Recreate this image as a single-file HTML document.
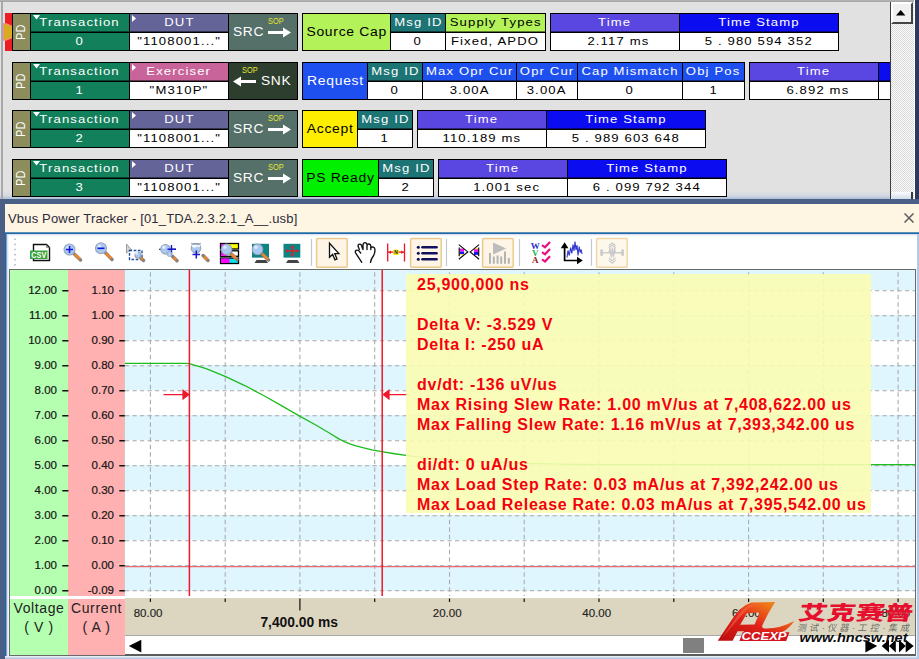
<!DOCTYPE html><html><head><meta charset="utf-8"><title>Vbus Power Tracker</title><style>
*{margin:0;padding:0;box-sizing:border-box}
html,body{width:919px;height:659px;overflow:hidden;background:#e1e1e1;font-family:"Liberation Sans",sans-serif}
.a{position:absolute}
.k{position:absolute;background:#000}
.c{position:absolute;text-align:center;white-space:nowrap;font-size:11.6px;letter-spacing:1px;line-height:15.4px;height:17px;overflow:hidden}
.h{height:18px;line-height:16.4px;box-shadow:inset 0 -1px rgba(0,0,0,.5)}
.s{display:inline-block;transform:scaleX(1.13)}
.w{color:#fff}
.v{background:#fff;color:#000}
.big{font-size:12.2px;letter-spacing:.6px}
.yl{position:absolute;font-size:11.5px;color:#111;-webkit-text-stroke:.2px #222;text-align:right;white-space:nowrap;line-height:14px;height:14px}
.xl{position:absolute;font-size:11.5px;color:#222;-webkit-text-stroke:.15px #222;text-align:center;white-space:nowrap;line-height:14px;width:80px}
.info{position:absolute;left:417px;font-weight:bold;font-size:16px;line-height:20px;color:#f6000f;white-space:nowrap;letter-spacing:.73px}
</style></head><body>
<div class="a" id="top" style="left:0;top:0;width:919px;height:199px;background:#e1e1e1;overflow:hidden">
<div class="a" style="left:0;top:191px;width:915px;height:8px;background:linear-gradient(#e1e1e1,#d4dae2 55%,#aebfd6)"></div>
<div class="a" style="left:1px;top:0;width:2px;height:199px;background:#a8a8a8"></div>
<div class="a" style="left:5px;top:13px;width:7px;height:38px;background:#ee1c24"></div>
<svg class="a" style="left:2px;top:22px" width="12" height="20"><path d="M1.6 1.5L3.5 1.4L10.6 4.4V15.6L3.5 18.4L1.6 18.3Z" fill="#dca820" stroke="#f08c8c" stroke-width="1"/></svg>
<div class="k" style="left:12px;top:13px;width:286px;height:38px"></div>
<div class="a" style="left:13px;top:14px;width:17px;height:36px;background:#8c8c5c"><div class="a w" style="left:0;top:0;width:17px;height:36px"><span class="a" style="left:-10px;top:11px;width:36px;text-align:center;font-size:12px;line-height:14px;letter-spacing:.6px;transform:rotate(-90deg) scaleX(.88)">PD</span></div></div>
<div class="c h" style="left:31px;top:14px;width:98px;background:#12805a;color:#fff"><svg class="a" style="left:2px;top:1px" width="8" height="5"><path d="M0 0H7L3.5 4.5Z" fill="#fff"/></svg><span class="s">Transaction</span></div>
<div class="c" style="left:31px;top:33px;width:98px;background:#12805a;color:#fff;padding-left:0px"><span class="s">0</span></div>
<div class="c h" style="left:130px;top:14px;width:98px;background:#646499;color:#fff"><svg class="a" style="left:2px;top:1px" width="5" height="8"><path d="M0 0V7L4 3.5Z" fill="#fff"/></svg><span class="s">DUT</span></div>
<div class="c" style="left:130px;top:33px;width:98px;background:#fff;color:#000;padding-left:0px"><span class="s">&quot;1108001...&quot;</span></div>
<div class="a" style="left:229px;top:14px;width:68px;height:36px;background:#557068"><span class="a w big" style="left:3.5px;top:10.4px;line-height:16px;transform:scaleX(1.13);transform-origin:0 0">SRC</span><span class="a" style="left:39px;top:2px;font-size:9px;line-height:10px;color:#e6e632;letter-spacing:0;transform:scaleX(.82);transform-origin:0 0">SOP</span><svg class="a" style="left:39px;top:13px" width="24" height="11"><path d="M0 4H15V0.5L23 5.5L15 10.5V7H0Z" fill="#fff"/></svg></div>
<div class="k" style="left:302px;top:13px;width:244px;height:38px"></div>
<div class="a" style="left:303px;top:14px;width:87px;height:36px;background:#b4f25a"><div class="a" style="left:0;right:0;top:10px;text-align:center;font-size:12px;letter-spacing:0.6px;line-height:16px;color:#000;white-space:nowrap"><span class="s" style="transform:scaleX(1.16)">Source Cap</span></div></div>
<div class="c h" style="left:391px;top:14px;width:54px;background:#1c7474;color:#fff"><span class="s">Msg ID</span></div>
<div class="c" style="left:391px;top:33px;width:54px;background:#fff;color:#000;padding-left:0px"><span class="s">0</span></div>
<div class="c h" style="left:446px;top:14px;width:99px;background:#b4f25a;color:#000"><span class="s">Supply Types</span></div>
<div class="c" style="left:446px;top:33px;width:99px;background:#fff;color:#000;padding-left:0px"><span class="s">Fixed, APDO</span></div>
<div class="k" style="left:550px;top:13px;width:289px;height:38px"></div>
<div class="c h" style="left:551px;top:14px;width:128px;background:#5a46e0;color:#fff"><span class="s">Time</span></div>
<div class="c" style="left:551px;top:33px;width:128px;background:#fff;color:#000;padding-left:7px"><span class="s">2.117 ms</span></div>
<div class="c h" style="left:680px;top:14px;width:158px;background:#0c0cf0;color:#fff"><span class="s">Time Stamp</span></div>
<div class="c" style="left:680px;top:33px;width:158px;background:#fff;color:#000;padding-left:0px"><span class="s">5 . 980 594 352</span></div>
<div class="k" style="left:12px;top:62px;width:286px;height:38px"></div>
<div class="a" style="left:13px;top:63px;width:17px;height:36px;background:#8c8c5c"><div class="a w" style="left:0;top:0;width:17px;height:36px"><span class="a" style="left:-10px;top:11px;width:36px;text-align:center;font-size:12px;line-height:14px;letter-spacing:.6px;transform:rotate(-90deg) scaleX(.88)">PD</span></div></div>
<div class="c h" style="left:31px;top:63px;width:98px;background:#12805a;color:#fff"><svg class="a" style="left:2px;top:1px" width="8" height="5"><path d="M0 0H7L3.5 4.5Z" fill="#fff"/></svg><span class="s">Transaction</span></div>
<div class="c" style="left:31px;top:82px;width:98px;background:#12805a;color:#fff;padding-left:0px"><span class="s">1</span></div>
<div class="c h" style="left:130px;top:63px;width:98px;background:#c8649a;color:#fff"><svg class="a" style="left:2px;top:1px" width="5" height="8"><path d="M0 0V7L4 3.5Z" fill="#fff"/></svg><span class="s">Exerciser</span></div>
<div class="c" style="left:130px;top:82px;width:98px;background:#fff;color:#000;padding-left:0px"><span class="s">&quot;M310P&quot;</span></div>
<div class="a" style="left:229px;top:63px;width:68px;height:36px;background:#2e3e2e"><span class="a w big" style="left:32px;top:10.4px;line-height:16px;transform:scaleX(1.13);transform-origin:0 0">SNK</span><span class="a" style="left:13px;top:2px;font-size:9px;line-height:10px;color:#e6e632;letter-spacing:0;transform:scaleX(.82);transform-origin:0 0">SOP</span><svg class="a" style="left:4px;top:13px" width="24" height="11"><path d="M23 4H8V0.5L0 5.5L8 10.5V7H23Z" fill="#fff"/></svg></div>
<div class="k" style="left:302px;top:62px;width:443px;height:38px"></div>
<div class="a" style="left:303px;top:63px;width:64px;height:36px;background:#1e50f0"><div class="a" style="left:0;right:0;top:10px;text-align:center;font-size:12px;letter-spacing:0.6px;line-height:16px;color:#fff;white-space:nowrap"><span class="s" style="transform:scaleX(1.16)">Request</span></div></div>
<div class="c h" style="left:368px;top:63px;width:54px;background:#1c7474;color:#fff"><span class="s">Msg ID</span></div>
<div class="c" style="left:368px;top:82px;width:54px;background:#fff;color:#000;padding-left:0px"><span class="s">0</span></div>
<div class="c h" style="left:423px;top:63px;width:93px;background:#1e50f0;color:#fff"><span class="s">Max Opr Cur</span></div>
<div class="c" style="left:423px;top:82px;width:93px;background:#fff;color:#000;padding-left:0px"><span class="s">3.00A</span></div>
<div class="c h" style="left:517px;top:63px;width:60px;background:#1e50f0;color:#fff"><span class="s">Opr Cur</span></div>
<div class="c" style="left:517px;top:82px;width:60px;background:#fff;color:#000;padding-left:0px"><span class="s">3.00A</span></div>
<div class="c h" style="left:578px;top:63px;width:104px;background:#1e50f0;color:#fff"><span class="s">Cap Mismatch</span></div>
<div class="c" style="left:578px;top:82px;width:104px;background:#fff;color:#000;padding-left:0px"><span class="s">0</span></div>
<div class="c h" style="left:683px;top:63px;width:61px;background:#1e50f0;color:#fff"><span class="s">Obj Pos</span></div>
<div class="c" style="left:683px;top:82px;width:61px;background:#fff;color:#000;padding-left:0px"><span class="s">1</span></div>
<div class="k" style="left:749px;top:62px;width:152px;height:38px"></div>
<div class="c h" style="left:750px;top:63px;width:128px;background:#5a46e0;color:#fff"><span class="s">Time</span></div>
<div class="c" style="left:750px;top:82px;width:128px;background:#fff;color:#000;padding-left:8px"><span class="s">6.892 ms</span></div>
<div class="c h" style="left:879px;top:63px;width:21px;background:#0c0cf0;color:#fff"><span class="s"></span></div>
<div class="c" style="left:879px;top:82px;width:21px;background:#fff;color:#000;padding-left:0px"><span class="s"></span></div>
<div class="k" style="left:12px;top:110px;width:286px;height:38px"></div>
<div class="a" style="left:13px;top:111px;width:17px;height:36px;background:#8c8c5c"><div class="a w" style="left:0;top:0;width:17px;height:36px"><span class="a" style="left:-10px;top:11px;width:36px;text-align:center;font-size:12px;line-height:14px;letter-spacing:.6px;transform:rotate(-90deg) scaleX(.88)">PD</span></div></div>
<div class="c h" style="left:31px;top:111px;width:98px;background:#12805a;color:#fff"><svg class="a" style="left:2px;top:1px" width="8" height="5"><path d="M0 0H7L3.5 4.5Z" fill="#fff"/></svg><span class="s">Transaction</span></div>
<div class="c" style="left:31px;top:130px;width:98px;background:#12805a;color:#fff;padding-left:0px"><span class="s">2</span></div>
<div class="c h" style="left:130px;top:111px;width:98px;background:#646499;color:#fff"><svg class="a" style="left:2px;top:1px" width="5" height="8"><path d="M0 0V7L4 3.5Z" fill="#fff"/></svg><span class="s">DUT</span></div>
<div class="c" style="left:130px;top:130px;width:98px;background:#fff;color:#000;padding-left:0px"><span class="s">&quot;1108001...&quot;</span></div>
<div class="a" style="left:229px;top:111px;width:68px;height:36px;background:#557068"><span class="a w big" style="left:3.5px;top:10.4px;line-height:16px;transform:scaleX(1.13);transform-origin:0 0">SRC</span><span class="a" style="left:39px;top:2px;font-size:9px;line-height:10px;color:#e6e632;letter-spacing:0;transform:scaleX(.82);transform-origin:0 0">SOP</span><svg class="a" style="left:39px;top:13px" width="24" height="11"><path d="M0 4H15V0.5L23 5.5L15 10.5V7H0Z" fill="#fff"/></svg></div>
<div class="k" style="left:302px;top:110px;width:111px;height:38px"></div>
<div class="a" style="left:303px;top:111px;width:54px;height:36px;background:#ffee00"><div class="a" style="left:0;right:0;top:10px;text-align:center;font-size:12px;letter-spacing:0.6px;line-height:16px;color:#000;white-space:nowrap"><span class="s" style="transform:scaleX(1.16)">Accept</span></div></div>
<div class="c h" style="left:358px;top:111px;width:54px;background:#1c7474;color:#fff"><span class="s">Msg ID</span></div>
<div class="c" style="left:358px;top:130px;width:54px;background:#fff;color:#000;padding-left:0px"><span class="s">1</span></div>
<div class="k" style="left:417px;top:110px;width:289px;height:38px"></div>
<div class="c h" style="left:418px;top:111px;width:128px;background:#5a46e0;color:#fff"><span class="s">Time</span></div>
<div class="c" style="left:418px;top:130px;width:128px;background:#fff;color:#000;padding-left:0px"><span class="s">110.189 ms</span></div>
<div class="c h" style="left:547px;top:111px;width:158px;background:#0c0cf0;color:#fff"><span class="s">Time Stamp</span></div>
<div class="c" style="left:547px;top:130px;width:158px;background:#fff;color:#000;padding-left:0px"><span class="s">5 . 989 603 648</span></div>
<div class="k" style="left:12px;top:159px;width:286px;height:38px"></div>
<div class="a" style="left:13px;top:160px;width:17px;height:36px;background:#8c8c5c"><div class="a w" style="left:0;top:0;width:17px;height:36px"><span class="a" style="left:-10px;top:11px;width:36px;text-align:center;font-size:12px;line-height:14px;letter-spacing:.6px;transform:rotate(-90deg) scaleX(.88)">PD</span></div></div>
<div class="c h" style="left:31px;top:160px;width:98px;background:#12805a;color:#fff"><svg class="a" style="left:2px;top:1px" width="8" height="5"><path d="M0 0H7L3.5 4.5Z" fill="#fff"/></svg><span class="s">Transaction</span></div>
<div class="c" style="left:31px;top:179px;width:98px;background:#12805a;color:#fff;padding-left:0px"><span class="s">3</span></div>
<div class="c h" style="left:130px;top:160px;width:98px;background:#646499;color:#fff"><svg class="a" style="left:2px;top:1px" width="5" height="8"><path d="M0 0V7L4 3.5Z" fill="#fff"/></svg><span class="s">DUT</span></div>
<div class="c" style="left:130px;top:179px;width:98px;background:#fff;color:#000;padding-left:0px"><span class="s">&quot;1108001...&quot;</span></div>
<div class="a" style="left:229px;top:160px;width:68px;height:36px;background:#557068"><span class="a w big" style="left:3.5px;top:10.4px;line-height:16px;transform:scaleX(1.13);transform-origin:0 0">SRC</span><span class="a" style="left:39px;top:2px;font-size:9px;line-height:10px;color:#e6e632;letter-spacing:0;transform:scaleX(.82);transform-origin:0 0">SOP</span><svg class="a" style="left:39px;top:13px" width="24" height="11"><path d="M0 4H15V0.5L23 5.5L15 10.5V7H0Z" fill="#fff"/></svg></div>
<div class="k" style="left:302px;top:159px;width:132px;height:38px"></div>
<div class="a" style="left:303px;top:160px;width:75px;height:36px;background:#00f000"><div class="a" style="left:0;right:0;top:10px;text-align:center;font-size:12px;letter-spacing:0.6px;line-height:16px;color:#000;white-space:nowrap"><span class="s" style="transform:scaleX(1.16)">PS Ready</span></div></div>
<div class="c h" style="left:379px;top:160px;width:54px;background:#1c7474;color:#fff"><span class="s">Msg ID</span></div>
<div class="c" style="left:379px;top:179px;width:54px;background:#fff;color:#000;padding-left:0px"><span class="s">2</span></div>
<div class="k" style="left:438px;top:159px;width:289px;height:38px"></div>
<div class="c h" style="left:439px;top:160px;width:128px;background:#5a46e0;color:#fff"><span class="s">Time</span></div>
<div class="c" style="left:439px;top:179px;width:128px;background:#fff;color:#000;padding-left:8px"><span class="s">1.001 sec</span></div>
<div class="c h" style="left:568px;top:160px;width:158px;background:#0c0cf0;color:#fff"><span class="s">Time Stamp</span></div>
<div class="c" style="left:568px;top:179px;width:158px;background:#fff;color:#000;padding-left:0px"><span class="s">6 . 099 792 344</span></div>
<div class="a" style="left:890px;top:0;width:1px;height:199px;background:#3c3c3c"></div>
<div class="a" style="left:891px;top:0;width:23px;height:199px;background:#f0f0f0;background-image:repeating-conic-gradient(#d9d9d9 0 25%,#fbfbfb 0 50%);background-size:2px 2px"></div>
<div class="a" style="left:0;top:0;width:914px;height:2px;background:linear-gradient(#b4b6ba,#a2a2a2)"></div>
<div class="a" style="left:891px;top:2px;width:22px;height:22px;background:#f0f0f0;border:2px solid #fff;border-right:2px solid #444;border-bottom:2px solid #444"><svg class="a" style="left:3px;top:5.5px" width="10" height="6"><path d="M0 5.5H9.4L4.7 0Z" fill="#000"/></svg></div>
<div class="a" style="left:892px;top:192px;width:21px;height:8px;background:linear-gradient(#fdfdfe,#c9d8e8);border-right:2px solid #383838"></div>
<div class="a" style="left:914px;top:0;width:1px;height:199px;background:#fff"></div>
<div class="a" style="left:915px;top:0;width:4px;height:199px;background:#2b3a5c"></div>
</div>
<div class="a" style="left:0;top:199px;width:919px;height:460px;background:#4a5f86"></div>
<div class="a" style="left:5px;top:204px;width:914px;height:29px;background:#fff5e3"></div>
<div class="a" style="left:8px;top:211px;font-size:13px;letter-spacing:.17px;line-height:16px;color:#2b2b3a;white-space:nowrap" id="ttl">Vbus Power Tracker - [01_TDA.2.3.2.1_A__.usb]</div>
<svg class="a" style="left:904px;top:213px" width="10" height="10"><path d="M0.5 0.5L9.5 9.5M9.5 0.5L0.5 9.5" stroke="#5c5c5c" stroke-width="1.5" fill="none"/></svg>
<div class="a" style="left:5px;top:232px;width:914px;height:427px;background:#1e68a6"></div>
<div class="a" style="left:5px;top:232px;width:914px;height:1px;background:#5c8fba"></div>
<div class="a" style="left:6px;top:234px;width:913px;height:425px;background:#dbe2f2"></div>
<div class="a" style="left:6px;top:234px;width:1px;height:425px;background:#7d9fcb"></div>
<div class="a" style="left:8px;top:235px;width:909px;height:421px;background:#f1f4fb"></div>
<div class="a" style="left:9px;top:236px;width:908px;height:33px;background:#fff"></div>
<svg class="a" style="left:9px;top:235px" width="908" height="34" viewBox="9 235 908 34" font-family="Liberation Sans, sans-serif"><path d="M15 238.5v27" stroke="#b8b8c4" stroke-width="1.6" stroke-dasharray="1.6 3.5"/><rect x="316.6" y="238.5" width="30.6" height="28.8" rx="1" fill="#fef5e6" stroke="#ecca8c" stroke-width="1.5" opacity="1"/><rect x="410.6" y="238.5" width="30.6" height="28.8" rx="1" fill="#fef5e6" stroke="#ecca8c" stroke-width="1.5" opacity="1"/><rect x="482.6" y="238.5" width="30.6" height="28.8" rx="1" fill="#fef5e6" stroke="#ecca8c" stroke-width="1.5" opacity="1"/><rect x="596.6" y="238.5" width="30.6" height="28.8" rx="1" fill="#fef5e6" stroke="#ecca8c" stroke-width="1.5" opacity=".75"/><path d="M311.5 239V266" stroke="#c4c6d2" stroke-width="1.2"/><path d="M446.5 239V266" stroke="#c4c6d2" stroke-width="1.2"/><path d="M519.5 239V266" stroke="#c4c6d2" stroke-width="1.2"/><path d="M591.5 239V266" stroke="#c4c6d2" stroke-width="1.2"/><path d="M33.5 244.5H46.5L49.5 247.5V260.5H33.5Z" fill="#fff" stroke="#111" stroke-width="1.4"/><path d="M46.5 244.5V247.5H49.5" fill="none" stroke="#777" stroke-width=".8"/><rect x="30" y="250.5" width="17.5" height="8.5" fill="#3ca43c"/><text x="38.8" y="257.8" font-size="8.5" font-weight="bold" fill="#fff" text-anchor="middle" textLength="15" lengthAdjust="spacingAndGlyphs">CSV</text><line x1="73.5" y1="253.3" x2="80.5" y2="260.0" stroke="#8a8078" stroke-width="3.4" stroke-linecap="round"/><line x1="74.6" y1="254.3" x2="79.6" y2="259.2" stroke="#f08428" stroke-width="2.4"/><circle cx="69.5" cy="249.5" r="5.5" fill="#a9c9f3" stroke="#98a4b8" stroke-width="1.1"/><circle cx="67.9" cy="247.5" r="1.7" fill="#e4f0ff" opacity=".9"/><path d="M66.0 249.5H73.0M69.5 246.0V253.0" stroke="#1414e0" stroke-width="1.5"/><line x1="104.9" y1="252.2" x2="112.0" y2="259.5" stroke="#8a8078" stroke-width="3.4" stroke-linecap="round"/><line x1="105.9" y1="253.3" x2="111.2" y2="258.6" stroke="#f08428" stroke-width="2.4"/><circle cx="101" cy="248.3" r="5.5" fill="#a9c9f3" stroke="#98a4b8" stroke-width="1.1"/><circle cx="99.4" cy="246.3" r="1.7" fill="#e4f0ff" opacity=".9"/><path d="M97.5 248.3H104.5" stroke="#1414e0" stroke-width="1.6"/><path d="M126.5 244V253L128.8 251L131.5 250Z" fill="#d8d8d8" stroke="#888" stroke-width=".8"/><rect x="129.5" y="250.5" width="12.5" height="9" fill="none" stroke="#1c4c9c" stroke-width="1.4" stroke-dasharray="2.6 1.6"/><line x1="140.1" y1="257.1" x2="143.5" y2="260.5" stroke="#8a8078" stroke-width="3.4" stroke-linecap="round"/><line x1="141.2" y1="258.2" x2="142.7" y2="259.7" stroke="#f08428" stroke-width="2.4"/><circle cx="138" cy="255" r="3" fill="#a9c9f3" stroke="#98a4b8" stroke-width="1.1"/><circle cx="136.4" cy="253" r="1.7" fill="#e4f0ff" opacity=".9"/><path d="M159 249.3H176" stroke="#333" stroke-width="1.2"/><line x1="172.4" y1="256.2" x2="177.0" y2="260.8" stroke="#8a8078" stroke-width="3.4" stroke-linecap="round"/><line x1="173.5" y1="257.3" x2="176.2" y2="260.0" stroke="#f08428" stroke-width="2.4"/><circle cx="165.5" cy="249.3" r="4.8" fill="#a9c9f3" stroke="#98a4b8" stroke-width="1.1"/><circle cx="163.9" cy="247.3" r="1.7" fill="#e4f0ff" opacity=".9"/><path d="M167.5 249.3H176M171.5 245V254" stroke="#1818c8" stroke-width="1.4"/><circle cx="169.5" cy="254" r="2.6" fill="#a9c9f3" stroke="#98a4b8" stroke-width=".8" opacity=".9"/><line x1="203.1" y1="255.5" x2="208.0" y2="260.5" stroke="#8a8078" stroke-width="3.4" stroke-linecap="round"/><line x1="204.1" y1="256.6" x2="207.2" y2="259.6" stroke="#f08428" stroke-width="2.4"/><circle cx="196" cy="248.3" r="4.8" fill="#a9c9f3" stroke="#98a4b8" stroke-width="1.1"/><circle cx="194.4" cy="246.3" r="1.7" fill="#e4f0ff" opacity=".9"/><path d="M192 246H200" stroke="#fff" stroke-width="1.6"/><path d="M191 243.8H201" stroke="#8890a0" stroke-width="1"/><path d="M192.5 254.5H200M196.3 250.5V258.5" stroke="#1818c8" stroke-width="1.5"/><rect x="220.5" y="243.5" width="18" height="5.5" fill="#ffff00" stroke="#000" stroke-width="1.3"/><rect x="221" y="244" width="6" height="4.5" fill="#ff00ff"/><rect x="220.5" y="250.8" width="18" height="5.5" fill="#fff" stroke="#000" stroke-width="1.3"/><rect x="221" y="251.3" width="6" height="4.5" fill="#ff00ff"/><rect x="220.5" y="258" width="18" height="5.5" fill="#00e8e8" stroke="#000" stroke-width="1.3"/><rect x="221" y="258.5" width="8.5" height="4.5" fill="#ff00ff"/><line x1="230.3" y1="253.0" x2="237.0" y2="259.5" stroke="#8a8078" stroke-width="3.4" stroke-linecap="round"/><line x1="231.4" y1="254.0" x2="236.1" y2="258.7" stroke="#f08428" stroke-width="2.4"/><circle cx="226.5" cy="249.3" r="5.3" fill="#a9c9f3" stroke="#98a4b8" stroke-width="1.1"/><circle cx="224.9" cy="247.3" r="1.7" fill="#e4f0ff" opacity=".9"/><rect x="252" y="243.8" width="17" height="13.8" fill="#0c8484"/><path d="M256.5 260H266L268 263H254.5Z" fill="#444"/><line x1="261.3" y1="253.0" x2="268.5" y2="260.0" stroke="#8a8078" stroke-width="3.4" stroke-linecap="round"/><line x1="262.4" y1="254.0" x2="267.6" y2="259.2" stroke="#f08428" stroke-width="2.4"/><circle cx="257.5" cy="249.3" r="5.3" fill="#a9c9f3" stroke="#98a4b8" stroke-width="1.1"/><circle cx="255.9" cy="247.3" r="1.7" fill="#e4f0ff" opacity=".9"/><rect x="283.5" y="243.8" width="16.8" height="13.8" fill="#0c8484"/><path d="M288 260H297.5L299.5 263H286Z" fill="#444"/><path d="M286.8 250.8H297.8M292.3 246.3V255.8" stroke="#f01820" stroke-width="1.3"/><path d="M292.3 245L294.2 247.6H290.4ZM292.3 257L294.2 254.4H290.4ZM285.3 250.8L288 248.9V252.7ZM299.3 250.8L296.6 248.9V252.7Z" fill="#f01820"/><path d="M329.5 243.3V257.2L332.6 254.4L335 259.8L337 258.9L334.7 253.6H338.9Z" fill="#fff" stroke="#111" stroke-width="1.3" stroke-linejoin="miter"/><path d="M361.8 262.3L356 253.6Q354.4 251.4 356.2 250.3Q358 249.6 359.6 251.6L360.7 253 M359.3 249.6L358 246Q358.2 244 360 244.2Q361.4 244.6 361.8 246.2L362.8 249.4 M363 249.5V244.5Q363.4 242.6 365.2 242.6Q367 242.8 367 244.6V249.6 M367 245.4Q367.6 243.8 369.2 244Q370.8 244.4 370.8 246V249.6 M370.9 247.6Q372 246.6 373.4 247.2Q375 248 375 250Q375 253 373.6 255.5Q371 259 370.5 262.3" fill="none" stroke="#111" stroke-width="1.35" stroke-linecap="round" stroke-linejoin="round"/><path d="M387.7 243.5V261.5M404.5 243.5V261.5M388 252.2H404" stroke="#f01424" stroke-width="1.3"/><path d="M388.3 252.2L391 250.5V253.9ZM403.9 252.2L401.2 250.5V253.9Z" fill="#f01424"/><rect x="393.3" y="249.6" width="5.4" height="5.4" fill="#f4f000"/><text x="396" y="254.3" font-size="5" font-weight="bold" fill="#222" text-anchor="middle">N</text><path d="M422.5 247.2H436.5" stroke="#10105c" stroke-width="2.6" stroke-linecap="round"/><circle cx="418.3" cy="247.2" r="1.5" fill="#10105c"/><path d="M422.5 253.2H436.5" stroke="#10105c" stroke-width="2.6" stroke-linecap="round"/><circle cx="418.3" cy="253.2" r="1.5" fill="#10105c"/><path d="M422.5 259.2H436.5" stroke="#10105c" stroke-width="2.6" stroke-linecap="round"/><circle cx="418.3" cy="259.2" r="1.5" fill="#10105c"/><path d="M459.3 245.4V258.4L467.6 251.9Z" fill="#fff"/><path d="M478.6 245.4V258.4L470.4 251.9Z" fill="#fff"/><rect x="459.6" y="248.6" width="4.5" height="3" fill="#f010e8"/><rect x="459.6" y="251.6" width="4.5" height="2.7" fill="#1818f0"/><rect x="459.6" y="254.3" width="4.5" height=".9" fill="#f0e810"/><rect x="474" y="248.3" width="4.5" height=".9" fill="#f0e810"/><rect x="474" y="249.2" width="4.5" height="2.7" fill="#f010e8"/><rect x="474" y="251.9" width="4.5" height="3" fill="#1818f0"/><path d="M459.2 247.6V256.2M478.7 247.6V256.2M458.8 244.6L467.8 251.9L458.8 259.2M479.1 244.6L470.2 251.9L479.1 259.2" fill="none" stroke="#0a0a0a" stroke-width="1.15"/><path d="M493 242.5L506.2 248.6L493 254.5Z" fill="#bdbdbd"/><path d="M490 253.1V263.8M493.8 256.6V263.8M497.6 255.4V263.8M501.2 256.6V263.8M505 251.6V263.8M508.8 258.1V263.8" stroke="#b4b4b4" stroke-width="2"/><text x="535.2" y="248.5" font-size="8.6" font-weight="bold" font-family="Liberation Serif, serif" fill="#2c2cc8" text-anchor="middle" textLength="9" lengthAdjust="spacingAndGlyphs">W</text><path d="M542 245.1L545 247.3L550 241.9" stroke="#ea1080" stroke-width="2.2" fill="none"/><text x="535.2" y="255.5" font-size="8.6" font-weight="bold" font-family="Liberation Serif, serif" fill="#18b050" text-anchor="middle" textLength="6.5" lengthAdjust="spacingAndGlyphs">V</text><path d="M542 252.1L545 254.3L550 248.9" stroke="#ea1080" stroke-width="2.2" fill="none"/><text x="535.2" y="262.8" font-size="8.6" font-weight="bold" font-family="Liberation Serif, serif" fill="#901818" text-anchor="middle" textLength="6.5" lengthAdjust="spacingAndGlyphs">A</text><path d="M542 259.40000000000003L545 261.6L550 256.2" stroke="#ea1080" stroke-width="2.2" fill="none"/><path d="M564.6 246V260.5H579" stroke="#000" stroke-width="1.7" fill="none"/><path d="M564.6 242.3L568.4 248.2H560.8ZM582.8 260.5L577 256.7V264.3Z" fill="#000"/><path d="M567 257.5L568 250.5L569.3 255.5L570.6 247.5L571.8 253.5L573 244.5L574 251L575 241.5L576 250L577 245L578 255.5L579.2 246.5L580.2 252.5L581.2 249.5L582 254" stroke="#3038d0" stroke-width="1.1" fill="none"/><g stroke="#c9c9cb" fill="none"><path d="M601.6 249.6V255.8M622.6 249.6V255.8" stroke-width="2.6"/><path d="M602 252.8H622" stroke-width="1.4"/><path d="M609 252.8L610 248L611.3 257.5L612.4 247.5L613.5 257.5L614.6 248L615.4 252.8" stroke-width="1.2"/><path d="M608.8 245.8L612.2 243L615.6 245.8M608.8 248L612.2 245.2L615.6 248M608.8 258L612.2 260.8L615.6 258M608.8 260.4L612.2 263.2L615.6 260.4" stroke-width="1.2"/></g></svg>
<div class="a" style="left:9px;top:269px;width:907px;height:387px;background:#6a6a6a"></div>
<div class="a" style="left:10px;top:270px;width:905px;height:385px;background:#fff"></div>
<div class="a" style="left:10px;top:270px;width:58px;height:326px;background:#b4ffb0"></div>
<div class="a" style="left:68px;top:270px;width:56px;height:326px;background:#ffb0b0"></div>
<div class="a" style="left:124px;top:270px;width:1px;height:326px;background:#d8c4c4"></div>
<div class="a" id="plot" style="left:125px;top:270px;width:790px;height:328px;background:#fff;overflow:hidden">
<div class="a" style="left:0;top:0px;width:790px;height:20px;background:#e0f6ff"></div>
<div class="a" style="left:0;top:45px;width:790px;height:25px;background:#e0f6ff"></div>
<div class="a" style="left:0;top:95px;width:790px;height:25px;background:#e0f6ff"></div>
<div class="a" style="left:0;top:145px;width:790px;height:25px;background:#e0f6ff"></div>
<div class="a" style="left:0;top:195px;width:790px;height:25px;background:#e0f6ff"></div>
<div class="a" style="left:0;top:245px;width:790px;height:25px;background:#e0f6ff"></div>
<div class="a" style="left:0;top:295px;width:790px;height:26px;background:#e0f6ff"></div>
<svg class="a" style="left:0;top:0" width="790" height="328" viewBox="125 270 790 328">
<path d="M125 290.7H915M125 315.7H915M125 340.7H915M125 365.7H915M125 390.7H915M125 415.7H915M125 440.7H915M125 465.7H915M125 490.7H915M125 515.7H915M125 540.7H915M125 565.7H915M125 590.7H915" stroke="#a6a6a6" stroke-width="1.1" stroke-dasharray="4.2 3.3" fill="none"/>
<path d="M150.4 272.3V596M225.2 272.3V596M299.9 272.3V596M374.7 272.3V596M449.5 272.3V596M524.2 272.3V596M599.0 272.3V596M673.8 272.3V596M748.6 272.3V596M823.3 272.3V596M898.1 272.3V596" stroke="#acacac" stroke-width="1.1" stroke-dasharray="4.5 3" fill="none"/>
<path d="M125 566.6H915" stroke="#f06870" stroke-width="1.3" fill="none"/>
<polyline points="125,363.4 187,363.4 189.1,363.7 197,365.8 206.1,368.6 225.7,376.7 245.3,385.8 263.6,395.5 281.9,405.9 300.1,416.4 315.8,425 328.9,432.8 339.3,439.1 345,441.9 349.8,443.8 356,445.8 362.8,447.7 372,449.8 381.6,451.6 393,453.5 405.9,455.4 420,457.1 439,458.8 458,460.2 478,461.4 503,462.6 530.6,463.5 560,464.1 590,464.5 635,464.7 915,464.7" stroke="#1cbc1c" stroke-width="1.3" fill="none"/>
<path d="M189.4 270V596M382.2 270V596" stroke="#f0182c" stroke-width="1.5" fill="none"/>
<path d="M163.5 394.6H184M183 390.2L188.8 394.6L183 399ZM408 394.6H388M389 390.2L383.2 394.6L389 399Z" stroke="#f0182c" stroke-width="1.2" fill="#f0182c"/>
</svg>
<div class="a" style="left:281px;top:4px;width:465px;height:239px;background:rgba(250,253,178,.9)"></div>
</div>
<div class="info" style="top:275px">25,900,000 ns</div>
<div class="info" style="top:315px">Delta V: -3.529 V</div>
<div class="info" style="top:335px">Delta I: -250 uA</div>
<div class="info" style="top:375px">dv/dt: -136 uV/us</div>
<div class="info" style="top:395px">Max Rising Slew Rate: 1.00 mV/us at 7,408,622.00 us</div>
<div class="info" style="top:415px">Max Falling Slew Rate: 1.16 mV/us at 7,393,342.00 us</div>
<div class="info" style="top:455px">di/dt: 0 uA/us</div>
<div class="info" style="top:475px">Max Load Step Rate: 0.03 mA/us at 7,392,242.00 us</div>
<div class="info" style="top:495px">Max Load Release Rate: 0.03 mA/us at 7,395,542.00 us</div>
<div class="yl" style="left:10px;width:47px;top:283px">12.00</div>
<div class="yl" style="left:68px;width:46px;top:283px">1.10</div>
<div class="yl" style="left:10px;width:47px;top:308px">11.00</div>
<div class="yl" style="left:68px;width:46px;top:308px">1.00</div>
<div class="yl" style="left:10px;width:47px;top:333px">10.00</div>
<div class="yl" style="left:68px;width:46px;top:333px">0.90</div>
<div class="yl" style="left:10px;width:47px;top:358px">9.00</div>
<div class="yl" style="left:68px;width:46px;top:358px">0.80</div>
<div class="yl" style="left:10px;width:47px;top:383px">8.00</div>
<div class="yl" style="left:68px;width:46px;top:383px">0.70</div>
<div class="yl" style="left:10px;width:47px;top:408px">7.00</div>
<div class="yl" style="left:68px;width:46px;top:408px">0.60</div>
<div class="yl" style="left:10px;width:47px;top:433px">6.00</div>
<div class="yl" style="left:68px;width:46px;top:433px">0.50</div>
<div class="yl" style="left:10px;width:47px;top:458px">5.00</div>
<div class="yl" style="left:68px;width:46px;top:458px">0.40</div>
<div class="yl" style="left:10px;width:47px;top:483px">4.00</div>
<div class="yl" style="left:68px;width:46px;top:483px">0.30</div>
<div class="yl" style="left:10px;width:47px;top:508px">3.00</div>
<div class="yl" style="left:68px;width:46px;top:508px">0.20</div>
<div class="yl" style="left:10px;width:47px;top:533px">2.00</div>
<div class="yl" style="left:68px;width:46px;top:533px">0.10</div>
<div class="yl" style="left:10px;width:47px;top:558px">1.00</div>
<div class="yl" style="left:68px;width:46px;top:558px">0.00</div>
<div class="yl" style="left:10px;width:47px;top:583px">0.00</div>
<div class="yl" style="left:68px;width:46px;top:583px">-0.09</div>
<svg class="a" style="left:10px;top:270px" width="115" height="328" viewBox="10 270 115 328"><path d="M62.3 290.7H68.4M119.3 290.7H124.8M62.3 315.7H68.4M119.3 315.7H124.8M62.3 340.7H68.4M119.3 340.7H124.8M62.3 365.7H68.4M119.3 365.7H124.8M62.3 390.7H68.4M119.3 390.7H124.8M62.3 415.7H68.4M119.3 415.7H124.8M62.3 440.7H68.4M119.3 440.7H124.8M62.3 465.7H68.4M119.3 465.7H124.8M62.3 490.7H68.4M119.3 490.7H124.8M62.3 515.7H68.4M119.3 515.7H124.8M62.3 540.7H68.4M119.3 540.7H124.8M62.3 565.7H68.4M119.3 565.7H124.8M62.3 590.7H68.4M119.3 590.7H124.8" stroke="#111" stroke-width="1.6" fill="none"/></svg>
<div class="a" style="left:10px;top:599px;width:58px;height:56px;background:#b4ffb0"></div>
<div class="a" style="left:68px;top:599px;width:57px;height:56px;background:#ffb0b0"></div>
<div class="a" style="left:10px;top:599px;width:58px;text-align:center;font-size:14px;letter-spacing:.6px;line-height:19px;color:#222">Voltage<br>( V )</div>
<div class="a" style="left:68px;top:599px;width:57px;text-align:center;font-size:14px;letter-spacing:.65px;line-height:19px;color:#222">Current<br>( A )</div>
<div class="a" style="left:125px;top:598px;width:790px;height:37px;background:#dcd6c0"></div>
<svg class="a" style="left:125px;top:598px" width="790" height="14" viewBox="125 598 790 14"><path d="M150.4 598.4V602.0M225.2 598.4V602.0M299.9 598.4V610.4M374.7 598.4V602.0M449.5 598.4V602.0M524.2 598.4V602.0M599.0 598.4V602.0M673.8 598.4V602.0M748.6 598.4V602.0M823.3 598.4V602.0M898.1 598.4V602.0" stroke="#111" stroke-width="1.2" fill="none"/></svg>
<div class="xl" style="left:108.1px;top:605.5px">80.00</div>
<div class="xl" style="left:407.2px;top:605.5px">20.00</div>
<div class="xl" style="left:556.7px;top:605.5px">40.00</div>
<div class="xl" style="left:706.3px;top:605.5px">60.00</div>
<div class="xl" style="left:855.8px;top:605.5px">80.00</div>
<div class="xl" style="left:239.2px;top:615.5px;width:120px;font-weight:bold;font-size:13.8px;color:#111;-webkit-text-stroke:0">7,400.00 ms</div>
<div class="a" style="left:125px;top:635px;width:790px;height:1px;background:#a8a8a8"></div>
<div class="a" style="left:125px;top:636px;width:790px;height:18px;background:#fff"></div>
<div class="a" style="left:125px;top:654px;width:790px;height:2px;background:#5c5c5c"></div>
<div class="a" style="left:683px;top:638px;width:21px;height:15px;background:#808080"></div>
<svg class="a" style="left:125px;top:636px" width="790" height="19" viewBox="125 636 790 19"><path d="M141.3 639.8V652.4L128.8 646.1Z M865.4 639.8V652.4L877.2 646.1Z M889 639.8V652.4L881.7 646.1Z M895.8 639.8V652.4L889 646.1Z M899 639.8V652.4L905.7 646.1Z M905.7 639.8V652.4L913.7 646.1Z" fill="#000"/></svg>
<div class="a" style="left:5px;top:656px;width:914px;height:3px;background:linear-gradient(#f4f7fb,#a9bcdc)"></div>
<div class="a" style="left:917px;top:234px;width:2px;height:425px;background:#b4c8e8"></div>
<svg class="a" style="left:710px;top:596px" width="209" height="52" viewBox="710 596 209 52"><defs><linearGradient id="lg" x1="0" y1="1" x2="1" y2="0"><stop offset="0" stop-color="#b80c0c"/><stop offset=".45" stop-color="#e0201a"/><stop offset=".8" stop-color="#f07a18"/><stop offset="1" stop-color="#f6a020"/></linearGradient><linearGradient id="lg2" x1="0" y1="0" x2="1" y2="0"><stop offset="0" stop-color="#d01810"/><stop offset="1" stop-color="#f08a1c"/></linearGradient></defs><path fill-rule="evenodd" fill="url(#lg)" d="M717.7 640.8 L733 618 Q741 606 751.5 602.6 L775.2 602 L768.2 613.5 L762.4 625.2 Q761 628.6 766.5 628.6 Q780 628.6 794.2 621 Q785 635.8 764 635.6 L741.5 635.6 L744 631.3 L737.6 631.3 L732.6 640.8 Z M747 613.2 L740.2 624.8 L754.6 624.4 L759.6 612.6 Z"/><path d="M722 638 L735.5 618.5 Q742.5 607.5 752 604.2 L760 603.8 Q748 606 741 616 Z" fill="#f86a50" opacity=".55"/><path d="M742.6 632.3H789.4L786.2 640.9H739.4Z" fill="#d4141c"/><text x="741.6" y="640.4" font-family="Liberation Sans, sans-serif" font-size="10.5" font-weight="bold" font-style="italic" fill="#fff" textLength="45" lengthAdjust="spacingAndGlyphs">CCEXP</text><text transform="translate(797.4 619.6) skewX(-11)" font-family="Liberation Sans, Noto Sans CJK SC, sans-serif" font-size="20" font-weight="900" fill="#e60f2d" textLength="114.5" lengthAdjust="spacingAndGlyphs">艾克赛普</text><text transform="translate(797 630.6) skewX(-12)" font-family="Liberation Sans, Noto Sans CJK SC, sans-serif" font-size="9" fill="#6e6e66" textLength="112" lengthAdjust="spacing">测试·仪器·工控·集成</text><text x="799.5" y="641.6" font-family="Liberation Sans, sans-serif" font-size="13" font-weight="bold" font-style="italic" fill="#0a0a0a" textLength="108" lengthAdjust="spacingAndGlyphs">www.hncsw.net</text></svg>
</body></html>
